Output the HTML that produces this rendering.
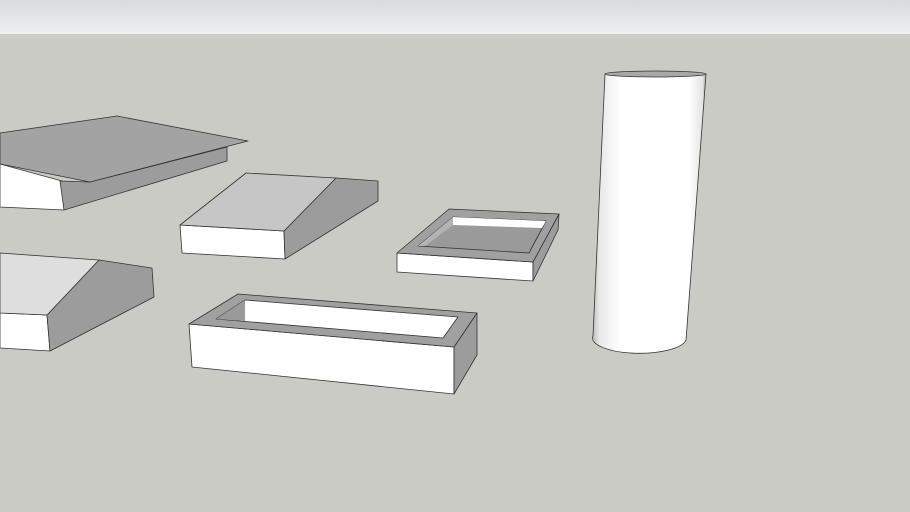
<!DOCTYPE html>
<html><head><meta charset="utf-8"><style>
html,body{margin:0;padding:0;width:910px;height:512px;overflow:hidden;background:#cbcbc6}
svg{display:block}
</style></head><body>
<svg width="910" height="512" viewBox="0 0 910 512" xmlns="http://www.w3.org/2000/svg">
<defs>
<linearGradient id="sky" x1="0" y1="0" x2="0" y2="1">
<stop offset="0" stop-color="#d7dbde"/><stop offset="1" stop-color="#eff0f0"/>
</linearGradient>
<linearGradient id="cyl" x1="0" y1="0" x2="1" y2="0">
<stop offset="0" stop-color="#bdbdbd"/><stop offset="0.06" stop-color="#e8e8e8"/>
<stop offset="0.25" stop-color="#ffffff"/><stop offset="0.85" stop-color="#ffffff"/>
<stop offset="0.97" stop-color="#e4e4e4"/><stop offset="1" stop-color="#a8a8a8"/>
</linearGradient>
</defs>
<rect x="0" y="0" width="910" height="34" fill="url(#sky)"/>
<rect x="0" y="34" width="910" height="4" fill="#cfcfca"/>
<g stroke="#333" stroke-width="0.8" stroke-linejoin="round">
<!-- shape 1 -->
<polygon points="0,164 62,181 64,210 0,207" fill="#fff"/>
<polygon points="60,181 90,182 227,147 227,161 64,210" fill="#9c9c9c"/>
<polygon points="0,133 117,116 248,141 90,182 0,164" fill="#a3a3a3"/>
<!-- shape 2 -->
<polygon points="180,225 284,231 285,259 182,253" fill="#fff"/>
<polygon points="284,231 336,178 378,181 378,201 285,259" fill="#9c9c9c"/>
<polygon points="180,225 246,173 336,178 284,231" fill="#c6c6c6"/>
<!-- shape 3 -->
<polygon points="0,313 47,315 50,351 0,348" fill="#fff"/>
<polygon points="99,260 152,268 154,297 50,351 47,315" fill="#9c9c9c"/>
<polygon points="0,253 99,260 47,315 0,313" fill="#dedede"/>
<!-- small tray -->
<polygon points="397,253 533,262 533,281 397,272" fill="#fff"/>
<polygon points="533,262 559,214 558,230 533,281" fill="#9c9c9c"/>
<polygon points="397,253 449,209 559,214 533,262" fill="#a0a0a0"/>
<polygon points="418,246 453,217 546,221 529,253" fill="#9a9a9a"/>
<polygon points="453,217 546,221 542,228 453,225" fill="#fff" stroke="none"/>
<polygon points="418,246 453,217 453,225 425,246" fill="#b4b4b4" stroke="none"/>
<!-- long tray -->
<polygon points="189,324 454,347 454,394 192,367" fill="#fff"/>
<polygon points="454,347 477,313 477,355 454,394" fill="#9c9c9c"/>
<polygon points="189,324 238,294 477,313 454,347" fill="#a0a0a0"/>
<polygon points="216,319 245,300 458,317 443,338" fill="#fff"/>
<polygon points="216,319 245,300 245,321" fill="#9a9a9a" stroke="none"/>
<!-- cylinder -->
<path d="M605,74 L593,336 A46,15 0 0 0 686,340 L706,74 Z" fill="url(#cyl)"/>
<ellipse cx="655.5" cy="74" rx="50.5" ry="3" fill="#a8a8a8"/>
</g>
</svg>
</body></html>
